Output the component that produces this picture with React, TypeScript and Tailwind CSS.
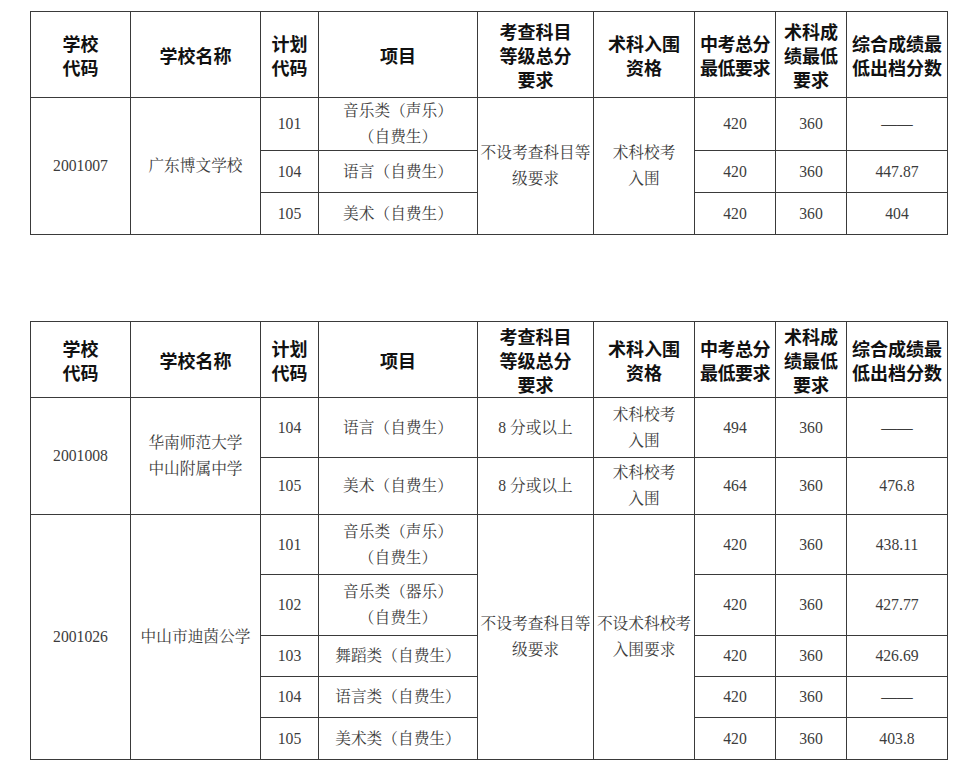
import React from "react";

const bodyFont = {
  fontFamily: '"Liberation Serif", "Noto Serif CJK SC", "Noto Sans CJK SC", serif',
};

const th = "border border-[#3a3a3a] p-0 text-center align-middle font-bold text-[18px] leading-[24px] text-[#111]";
const td = "border border-[#3a3a3a] p-0 text-center align-middle text-[15.7px] leading-[26px] text-[#3c3c3c]";

function Cols() {
  return (
    <colgroup>
      <col className="w-[100px]" />
      <col className="w-[130px]" />
      <col className="w-[58px]" />
      <col className="w-[159px]" />
      <col className="w-[116px]" />
      <col className="w-[101px]" />
      <col className="w-[81px]" />
      <col className="w-[71px]" />
      <col className="w-[101px]" />
    </colgroup>
  );
}

function Head({ h }: { h: string }) {
  return (
    <tr className={h}>
      <th className={th}>学校<br />代码</th>
      <th className={th}>学校名称</th>
      <th className={th}>计划<br />代码</th>
      <th className={th}>项目</th>
      <th className={th}>考查科目<br />等级总分<br />要求</th>
      <th className={th}>术科入围<br />资格</th>
      <th className={`${th} tracking-[-0.5px]`}>中考总分<br />最低要求</th>
      <th className={th}>术科成<br />绩最低<br />要求</th>
      <th className={th}>综合成绩最<br />低出档分数</th>
    </tr>
  );
}

export default function App() {
  return (
    <div className="min-h-[775px] w-[977px] bg-white pt-[11px] pl-[30px]" style={bodyFont}>
      <table className="w-[918px] table-fixed border-collapse">
        <Cols />
        <thead style={{ fontFamily: '"Noto Sans CJK SC", sans-serif' }}>
          <Head h="h-[86px]" />
        </thead>
        <tbody>
          <tr className="h-[53px]">
            <td className={td} rowSpan={3}>2001007</td>
            <td className={td} rowSpan={3}>广东博文学校</td>
            <td className={td}>101</td>
            <td className={td}>音乐类（声乐）<br />（自费生）</td>
            <td className={`${td} whitespace-nowrap`} rowSpan={3}>不设考查科目等<br />级要求</td>
            <td className={td} rowSpan={3}>术科校考<br />入围</td>
            <td className={td}>420</td>
            <td className={td}>360</td>
            <td className={td}>——</td>
          </tr>
          <tr className="h-[42px]">
            <td className={td}>104</td>
            <td className={td}>语言（自费生）</td>
            <td className={td}>420</td>
            <td className={td}>360</td>
            <td className={td}>447.87</td>
          </tr>
          <tr className="h-[42px]">
            <td className={td}>105</td>
            <td className={td}>美术（自费生）</td>
            <td className={td}>420</td>
            <td className={td}>360</td>
            <td className={td}>404</td>
          </tr>
        </tbody>
      </table>

      <table className="mt-[86px] w-[918px] table-fixed border-collapse">
        <Cols />
        <thead style={{ fontFamily: '"Noto Sans CJK SC", sans-serif' }}>
          <Head h="h-[76px]" />
        </thead>
        <tbody>
          <tr className="h-[60px]">
            <td className={td} rowSpan={2}>2001008</td>
            <td className={td} rowSpan={2}>华南师范大学<br />中山附属中学</td>
            <td className={td}>104</td>
            <td className={td}>语言（自费生）</td>
            <td className={td}>8 分或以上</td>
            <td className={td}>术科校考<br />入围</td>
            <td className={td}>494</td>
            <td className={td}>360</td>
            <td className={td}>——</td>
          </tr>
          <tr className="h-[57px]">
            <td className={td}>105</td>
            <td className={td}>美术（自费生）</td>
            <td className={td}>8 分或以上</td>
            <td className={td}>术科校考<br />入围</td>
            <td className={td}>464</td>
            <td className={td}>360</td>
            <td className={td}>476.8</td>
          </tr>
          <tr className="h-[60px]">
            <td className={td} rowSpan={5}>2001026</td>
            <td className={td} rowSpan={5}>中山市迪茵公学</td>
            <td className={td}>101</td>
            <td className={td}>音乐类（声乐）<br />（自费生）</td>
            <td className={`${td} whitespace-nowrap`} rowSpan={5}>不设考查科目等<br />级要求</td>
            <td className={`${td} whitespace-nowrap`} rowSpan={5}>不设术科校考<br />入围要求</td>
            <td className={td}>420</td>
            <td className={td}>360</td>
            <td className={td}>438.11</td>
          </tr>
          <tr className="h-[61px]">
            <td className={td}>102</td>
            <td className={td}>音乐类（器乐）<br />（自费生）</td>
            <td className={td}>420</td>
            <td className={td}>360</td>
            <td className={td}>427.77</td>
          </tr>
          <tr className="h-[41px]">
            <td className={td}>103</td>
            <td className={td}>舞蹈类（自费生）</td>
            <td className={td}>420</td>
            <td className={td}>360</td>
            <td className={td}>426.69</td>
          </tr>
          <tr className="h-[41px]">
            <td className={td}>104</td>
            <td className={td}>语言类（自费生）</td>
            <td className={td}>420</td>
            <td className={td}>360</td>
            <td className={td}>——</td>
          </tr>
          <tr className="h-[42px]">
            <td className={td}>105</td>
            <td className={td}>美术类（自费生）</td>
            <td className={td}>420</td>
            <td className={td}>360</td>
            <td className={td}>403.8</td>
          </tr>
        </tbody>
      </table>
    </div>
  );
}
